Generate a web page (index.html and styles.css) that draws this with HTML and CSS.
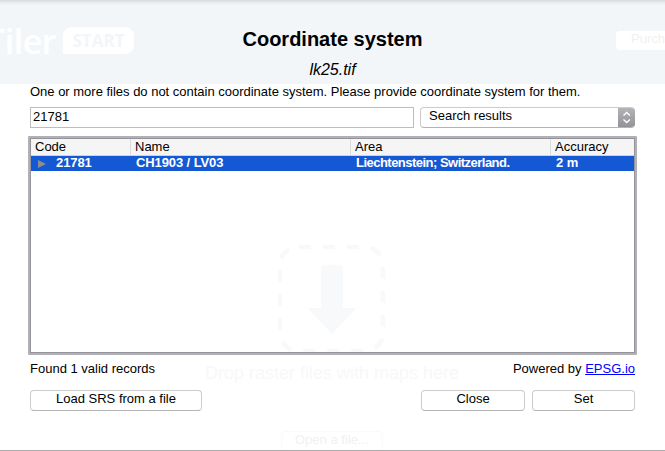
FILE: index.html
```html
<!DOCTYPE html>
<html lang="en">
<head>
<meta charset="utf-8">
<title>Coordinate system</title>
<link rel="stylesheet" href="styles.css">
</head>
<body>
<div class="backdrop" aria-hidden="true">
  <div class="banner">
    <span class="logo">Tiler</span>
    <span class="badge">START</span>
    <span class="purchase">Purch</span>
  </div>
  <svg class="drop-icon" width="110" height="112" viewBox="0 0 110 112">
    <rect x="3" y="3" width="103" height="104" rx="18" fill="none" stroke="#f8f9fa" stroke-width="4.5" stroke-dasharray="12 12" stroke-dashoffset="-1"/>
    <path d="M44 22q11-3 22 0v42h14L55 90 30 64h14z" fill="#f8f9fa"/>
  </svg>
  <div class="drop-text"><span>Drop raster files with maps here</span></div>
  <div class="open-file">Open a file...</div>
</div>
<main class="dialog">
  <h1><span>Coordinate system</span></h1>
  <div class="filename"><span>lk25.tif</span></div>
  <p class="message">One or more files do not contain coordinate system. Please provide coordinate system for them.</p>
  <div class="search">
    <div class="field">21781</div>
    <div class="select"><span>Search results</span>
      <svg width="17" height="21" viewBox="0 0 17 21"><path d="M5.500 8.500l3.200-3 3.200 3M5.500 12.500l3.200 3 3.200-3" fill="none" stroke="#fff" stroke-width="1.400"/></svg>
    </div>
  </div>
  <section class="table">
    <div class="row head"><span>Code</span><span>Name</span><span>Area</span><span>Accuracy</span></div>
    <div class="row selected"><span><i class="arrow"></i>21781</span><span>CH1903 / LV03</span><span class="area">Liechtenstein; Switzerland.</span><span>2 m</span></div>
  </section>
  <div class="status"><span>Found 1 valid records</span><span>Powered by <a href="#">EPSG.io</a></span></div>
  <div class="buttons">
    <div class="button load">Load SRS from a file</div>
    <div class="button close">Close</div>
    <div class="button set">Set</div>
  </div>
</main>
</body>
</html>
```
FILE: styles.css
```css
* { box-sizing: border-box; }
body {
  margin: 0;
  width: 665px;
  height: 451px;
  overflow: hidden;
  position: relative;
  background: #fff;
  color: #000;
  font: 13px/16px "Liberation Sans", Arial, sans-serif;
  white-space: nowrap;
}
.backdrop { position: absolute; inset: 0; overflow: hidden; }
.banner {
  position: relative;
  height: 84px;
  background: linear-gradient(#d6dade, #e5e9ec 2px, #f2f6f9 5px);
}
.logo {
  position: absolute; left: -14px; top: 20px;
  color: #fff; font: 600 34px/42px "Open Sans", sans-serif;
  letter-spacing: -.5px;
}
.badge {
  position: absolute; left: 63px; top: 27px; width: 71px; height: 27px;
  border-radius: 9px 9px 9px 0; background: #fff; color: #f2f6f9;
  font: bold 17px/28px "Open Sans", sans-serif; text-align: center;
}
.purchase {
  position: absolute; left: 616px; top: 31px; width: 90px; height: 19px;
  padding-left: 15px; border-radius: 4px; background: #fff; color: #f1f1f1;
  font-size: 13px; line-height: 15px;
}
.drop-icon { position: absolute; left: 277px; top: 244px; }
.drop-text {
  position: absolute; left: 205px; top: 362px;
  color: #f8f8f8; font-size: 18px; line-height: 22px; letter-spacing: 0;
}
.open-file {
  position: absolute; left: 281px; top: 431px; width: 102px; height: 21px;
  padding-left: 13px; border: 1px solid #fafafa; border-radius: 4px;
  color: #f1f1f1; line-height: 16px;
}
.dialog {
  position: relative;
  height: 451px;
  display: flex;
  flex-direction: column;
  padding: 27px 28px 0;
  border-bottom: 1px solid #aaa;
}
h1 { margin: 0; font-size: 20px; line-height: 24px; height: 32px; text-align: center; }
.filename { height: 25px; font-size: 16px; line-height: 22px; font-style: italic; text-align: center; }
.message { margin: 0 2px; height: 23px; letter-spacing: -.01px; }
.search { display: flex; gap: 6px; padding: 0 2px; height: 29px; }
.field {
  width: 384px; height: 21px; padding: 0 2px;
  border: 1px solid #bdbdbd; line-height: 18px;
}
.select {
  flex: 0 0 215px; height: 21px; display: flex; justify-content: space-between;
  padding-left: 8px; border: 1px solid #ccc; border-bottom-color: #b5b5b5;
  border-right: 0; border-radius: 4px; line-height: 16px; overflow: hidden;
}
.select svg { margin-top: -1px; background: linear-gradient(#b5b4b9, #929196); }
.table {
  height: 219px; width: 609px;
  border: 2px solid #b0b0b6; border-radius: 1px;
  box-shadow: inset 0 0 0 1px #94949a;
  padding: 1px;
}
.row { display: grid; grid-template-columns: 99px 220px 200px 1fr; height: 17px; }
.head { background: #f5f5f5; border-bottom: 1px solid #d2d2d2; }
.head span { padding-left: 4px; line-height: 16px; }
.head span + span { border-left: 1px solid #dcdcdc; background-clip: padding-box; }
.selected { height: 15px; background: #1458d4; color: #fff; font-weight: bold; line-height: 14px; }
.selected span { padding-left: 6px; letter-spacing: -.1px; }
.selected .area { letter-spacing: -.52px; }
.arrow {
  display: inline-block; margin: 0 10px 0 1px; vertical-align: -1px;
  border-left: 8px solid #8d8d8d;
  border-top: 4px solid transparent; border-bottom: 4px solid transparent;
}
.status { display: flex; justify-content: space-between; height: 35px; padding: 6px 2px 0; }
a { color: #00f; }
.buttons { display: flex; padding: 0 2px; }
.button {
  height: 21px; text-align: center; line-height: 16px;
  border: 1px solid #ccc; border-bottom-color: #b5b5b5; border-radius: 4px;
}
.load { width: 172px; margin-right: auto; }
.close { width: 104px; margin-right: 7px; }
.set { width: 103px; }
```
